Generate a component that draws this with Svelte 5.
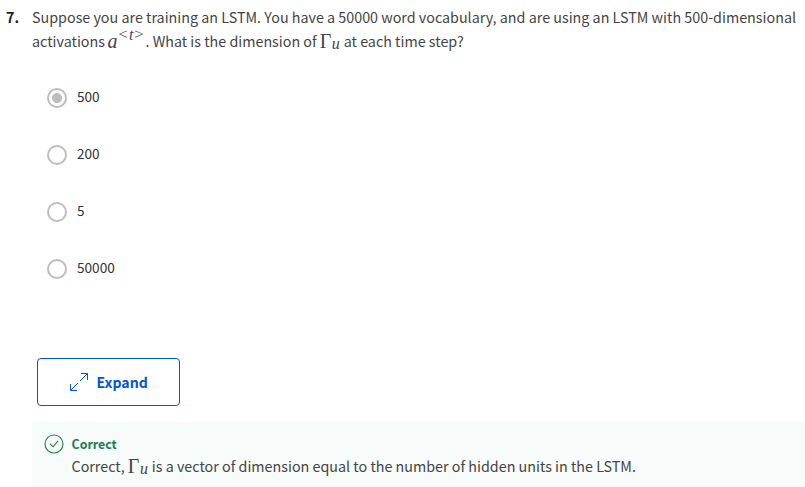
<script>
  const options = ['500', '200', '5', '50000'];
  let selected = $state('500');
</script>

<main>
  <section class="question">
    <div class="number">7.</div>
    <div class="prompt">
      <div class="line first">Suppose you are training an LSTM. You have a 50000 word vocabulary, and are using an LSTM with 500-dimensional</div>
      <div class="line second"><span>activations</span><span class="math act"><i>a</i><span class="sup"><span class="angle">&lt;</span><i>t</i><span class="angle">&gt;</span></span></span><span class="what">. What is the dimension of</span><span class="math gamma">Γ<i class="sub">u</i></span><span class="rest">at each time step?</span></div>
    </div>
  </section>

  <div class="options" role="radiogroup">
    {#each options as option}
      <div class="option">
        <span class="radio" class:checked={option === selected}></span>
        <span class="label">{option}</span>
      </div>
    {/each}
  </div>

  <button>
    <svg width="18" height="18" viewBox="0 0 18 18" fill="none" stroke="#0056d2" stroke-width="1">
      <path d="M.5 17.5 8 10M10 8 17.500.5M11 .5h6.500V7M.5 11v6.500H7" />
    </svg>
    <span>Expand</span>
  </button>

  <section class="feedback">
    <svg width="20" height="20" viewBox="0 0 20 20" fill="none" stroke="#1d7c50" stroke-width="1.1">
      <circle cx="10" cy="10" r="9" />
      <path d="m6.200 10 2.800 2.800 5-6" />
    </svg>
    <div class="message">
      <div class="title">Correct</div>
      <div class="line answer"><span>Correct,</span><span class="math gamma">Γ<i class="sub">u</i></span><span class="rest">is a vector of dimension equal to the number of hidden units in the LSTM.</span></div>
    </div>
  </section>
</main>

<style>
  :global(body) { margin: 0; background: #fff; }
  main {
    width: 805px;
    height: 487px;
    overflow: hidden;
    box-sizing: border-box;
    padding-top: 5px;
    display: flex;
    flex-direction: column;
    font-family: "Noto Sans CJK SC", sans-serif;
    font-size: 14.32px;
    line-height: 24px;
    color: #444;
  }
  .question { display: flex; height: 48px; }
  .number { width: 32px; padding-left: 6px; box-sizing: border-box; font-weight: 700; color: #1f1f1f; flex: none; }
  .line { white-space: nowrap; height: 24px; }
  .second, .answer { display: flex; }
  .math { font-family: "Liberation Serif", serif; display: flex; flex: none; }
  .act { width: 38px; margin-left: 2.5px; font-size: 20px; }
  .sup { font-size: 16px; margin: -6px 0 0 1px; display: flex; gap: 0.5px; }
  .angle { font-size: 14px; width: 10px; text-align: center; transform: scaleX(1.2); }
  .gamma { font-size: 20px; margin-left: 3px; width: 22.5px; }
  .sub { font-size: 16px; margin: 3px 0 0 0.5px; }
  .rest { margin-left: 1.5px; }
  .options { margin-top: 16px; }
  .option { height: 57px; display: flex; align-items: center; padding-left: 47px; gap: 10px; font-size: 13.6px; }
  .label { padding-bottom: 4px; color: #333; }
  .radio { width: 20px; height: 20px; box-sizing: border-box; border: 2px solid #bdbdbd; border-radius: 50%; }
  .checked { background: radial-gradient(circle, #bdbdbd 0 4.7px, transparent 5.3px); }
  button {
    margin: 61px 0 0 37px;
    width: 143px;
    height: 48px;
    flex: none;
    border: 1px solid #0056d2;
    border-radius: 4px;
    background: #fff;
    display: flex;
    align-items: center;
    padding: 0 0 0 32px;
    gap: 8.5px;
    font: 700 14.1px/24px "Noto Sans CJK SC", sans-serif;
    color: #0056d2;
  }
  .feedback { margin: 16px 0 0 32px; height: 65px; background: #f7fbf9; display: flex; box-sizing: border-box; padding: 12px 0 0 12px; flex: none; }
  .feedback svg { flex: none; margin-right: 7.5px; }
  .title { font-weight: 700; font-size: 12.4px; line-height: 20px; color: #1d7c50; height: 20px; }
</style>
